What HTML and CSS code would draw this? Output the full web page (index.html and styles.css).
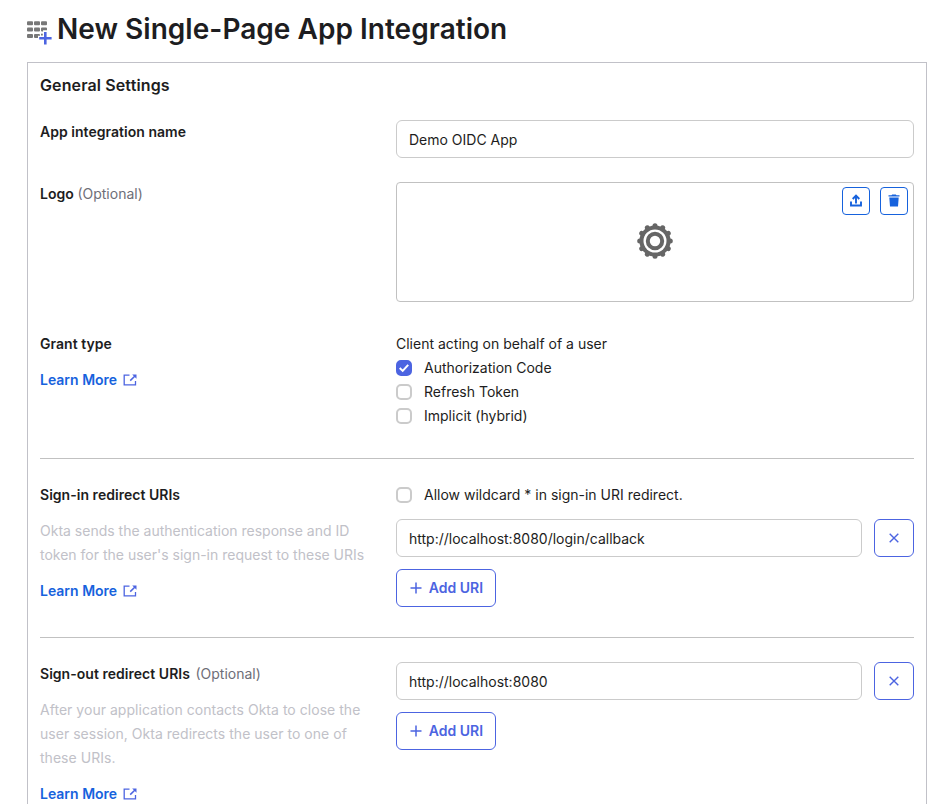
FILE: index.html
```html
<!DOCTYPE html>
<html lang="en">
<head>
<meta charset="utf-8">
<title>New Single-Page App Integration</title>
<link rel="stylesheet" href="styles.css">
</head>
<body>
<svg class="defs" width="0" height="0" aria-hidden="true">
  <symbol id="external" viewBox="0 0 14 12"><path d="M6.5 1.2H1.2v9.6h11.3V7" fill="none" stroke="currentColor" stroke-width="1.3"/><path d="M9.2 .5h4.3v4.3z" fill="currentColor"/><path d="M12 2L7.2 6.6" stroke="currentColor" stroke-width="1.5"/></symbol>
  <symbol id="cross" viewBox="0 0 10 10"><path d="M.7 .7l8.6 8.6M9.3 .7L.7 9.3" fill="none" stroke="currentColor" stroke-width="1.4"/></symbol>
  <symbol id="plus" viewBox="0 0 12 12"><path d="M6 .5v11M.5 6h11" fill="none" stroke="currentColor" stroke-width="1.5"/></symbol>
</svg>
<header class="page-head">
  <svg class="grid-icon" width="25" height="25" viewBox="0 0 25 25">
    <g fill="#777">
      <rect x="0" y="1.2" width="6" height="4" rx="1"/><rect x="7" y="1.2" width="6" height="4" rx="1"/><rect x="14" y="1.2" width="6" height="4" rx="1"/>
      <rect x="0" y="7.6" width="6" height="4" rx="1"/><rect x="7" y="7.6" width="6" height="4" rx="1"/><path d="M15 7.6h4q1 0 1 1v1.6h-4v1.4h-1q-1 0-1-1v-2q0-1 1-1z"/>
      <rect x="0" y="13.9" width="6" height="4" rx="1"/><path d="M8 13.9h4q1 0 1 1v.8h-2v2.2H8q-1 0-1-1v-2q0-1 1-1z"/><rect x="14" y="13.7" width="1.8" height="1.8"/>
    </g>
    <path d="M18.3 12v12.4M12.2 18.3h12.4" stroke="#4c64e1" stroke-width="2.6" fill="none"/>
  </svg>
  <h1>New Single-Page App Integration</h1>
</header>
<main class="panel">
  <h2>General Settings</h2>
  <section class="row name-row">
    <label class="label" for="app-name">App integration name</label>
    <input class="field" id="app-name" type="text" value="Demo OIDC App">
  </section>
  <section class="row logo-row">
    <div class="label">Logo <span class="optional">(Optional)</span></div>
    <div class="logo-box">
      <svg class="gear" width="36" height="36" viewBox="-18 -18 36 36">
        <g stroke="#666" stroke-width="5" stroke-linecap="round">
          <path d="M0-15.3V15.3"/><path d="M0-15.3V15.3" transform="rotate(30)"/><path d="M0-15.3V15.3" transform="rotate(60)"/><path d="M0-15.3V15.3" transform="rotate(90)"/><path d="M0-15.3V15.3" transform="rotate(120)"/><path d="M0-15.3V15.3" transform="rotate(150)"/>
        </g>
        <circle r="15.6" fill="#666"/><circle r="11.5" fill="#fff"/><circle r="7.2" fill="#fff" stroke="#666" stroke-width="4"/>
      </svg>
      <div class="logo-actions">
        <button class="icon-btn" aria-label="Upload logo"><svg width="12" height="13" viewBox="0 0 12 13"><path d="M1 7.5v4h10v-4M6 9.5V1.5M2.7 5L6 1.7L9.3 5" fill="none" stroke="currentColor" stroke-width="1.9"/></svg></button>
        <button class="icon-btn" aria-label="Delete logo"><svg width="12" height="13" viewBox="0 0 12 13"><path d="M.5 1.2h3L4.2.4h3.6l.7.8h3v1.3H.5zM1.3 3.4h9.4L10 12.4H2z" fill="currentColor"/></svg></button>
      </div>
    </div>
  </section>
  <section class="row grant-row">
    <div class="side">
      <div class="label">Grant type</div>
      <a class="more" href="#">Learn More<svg width="14" height="12"><use href="#external"/></svg></a>
    </div>
    <div>
      <div>Client acting on behalf of a user</div>
      <label class="check"><input type="checkbox" checked><span class="box"><svg width="16" height="16" viewBox="0 0 16 16"><path d="M3.7 8.1l3 2.8 5.5-6" fill="none" stroke="#fff" stroke-width="2"/></svg></span>Authorization Code</label>
      <label class="check"><input type="checkbox"><span class="box"></span>Refresh Token</label>
      <label class="check"><input type="checkbox"><span class="box"></span>Implicit (hybrid)</label>
    </div>
  </section>
  <section class="row ruled signin-row">
    <div class="side">
      <div class="label">Sign-in redirect URIs</div>
      <p class="help">Okta sends the authentication response and ID token for the user's sign-in request to these URIs</p>
      <a class="more" href="#">Learn More<svg width="14" height="12"><use href="#external"/></svg></a>
    </div>
    <div class="uris">
      <label class="check"><input type="checkbox"><span class="box"></span>Allow wildcard * in sign-in URI redirect.</label>
      <div class="uri"><input class="field" type="text" aria-label="Sign-in URI" value="http://localhost:8080/login/callback"><button class="remove" aria-label="Remove"><svg width="10" height="10"><use href="#cross"/></svg></button></div>
      <button class="add"><svg width="12" height="12"><use href="#plus"/></svg>Add URI</button>
    </div>
  </section>
  <section class="row ruled">
    <div class="side">
      <div class="label">Sign-out redirect URIs <span class="optional wide">(Optional)</span></div>
      <p class="help signout-help">After your application contacts Okta to close the user session, Okta redirects the user to one of these URIs.</p>
      <a class="more last" href="#">Learn More<svg width="14" height="12"><use href="#external"/></svg></a>
    </div>
    <div class="uris">
      <div class="uri"><input class="field" type="text" aria-label="Sign-out URI" value="http://localhost:8080"><button class="remove" aria-label="Remove"><svg width="10" height="10"><use href="#cross"/></svg></button></div>
      <button class="add"><svg width="12" height="12"><use href="#plus"/></svg>Add URI</button>
    </div>
  </section>
</main>
</body>
</html>
```
FILE: styles.css
```css
* { box-sizing: border-box; }
body {
  margin: 0;
  background: #fff;
  color: #1d1d21;
  font: 400 14px/24px Inter, "Liberation Sans", sans-serif;
}
svg { display: block; flex: none; }
.defs { position: absolute; }
.page-head {
  display: flex;
  height: 62px;
  padding: 12px 0 0 27px;
  gap: 5px;
}
.grid-icon { margin-top: 8px; }
h1 { margin: 0; font-size: 28px; line-height: 34px; font-weight: 600; letter-spacing: .03px; white-space: nowrap; }
.panel {
  width: 900px;
  height: 742px;
  margin-left: 27px;
  padding: 10px 12px 0;
  border: 1px solid #c1c1c8;
  border-bottom: 0;
}
h2 { margin: 0 0 23px; font-size: 16px; line-height: 24px; font-weight: 600; letter-spacing: .12px; }
.row { display: grid; grid-template-columns: 356px 518px; align-items: start; }
.label { font-weight: 600; letter-spacing: .03px; white-space: nowrap; }
.optional { font-weight: 400; letter-spacing: 0; color: #6e6e78; }
.optional.wide { margin-left: 2px; }
.name-row { margin-bottom: 24px; }
.logo-row { margin-bottom: 30px; }
.grant-row { margin-bottom: 30px; }
.signin-row { margin-bottom: 30px; }
.ruled { border-top: 1px solid #c1c1c1; padding-top: 24px; }
.field {
  width: 100%;
  min-width: 0;
  height: 38px;
  padding: 0 12px;
  border: 1px solid #cbcbcb;
  border-radius: 6px;
  background: #fff;
  color: inherit;
  font: inherit;
  outline: 0;
}
.logo-box {
  position: relative;
  display: flex;
  justify-content: center;
  align-items: center;
  height: 120px;
  border: 1px solid #c1c1c1;
  border-radius: 4px;
}
.gear { margin-bottom: 2px; }
.logo-actions { position: absolute; top: 4px; right: 5px; display: flex; gap: 10px; }
button { display: flex; justify-content: center; align-items: center; padding: 0; background: #fff; font: inherit; }
.icon-btn { width: 28px; height: 28px; border: 1px solid #1662dd; border-radius: 4px; color: #1662dd; }
.icon-btn svg { margin-bottom: 1px; }
.side { display: flex; flex-direction: column; gap: 12px; }
.help { width: 332px; margin: 0; color: #c1c1c8; }
.signout-help { letter-spacing: .03px; }
.more { display: flex; align-items: center; gap: 6px; color: #1662dd; font-weight: 600; text-decoration: none; }
.more svg { color: #4c64e1; }
.last { height: 22px; padding-top: 2px; line-height: 20px; }
.check { display: flex; align-items: center; gap: 12px; height: 24px; white-space: nowrap; }
.check input { display: none; }
.box { width: 16px; height: 16px; border: 2px solid #cbcbcb; border-radius: 5px; }
.box svg { margin: -2px; }
.check input:checked + .box { border-color: #4c64e1; background: #4c64e1; }
.uris { display: flex; flex-direction: column; gap: 12px; }
.uri { display: flex; gap: 12px; }
.remove { flex: none; width: 40px; height: 38px; border: 1px solid #4c64e1; border-radius: 6px; color: #4c64e1; }
.add { width: 100px; height: 38px; gap: 7px; padding-left: 1px; border: 1px solid #4c64e1; border-radius: 6px; color: #4c64e1; font-weight: 600; }
```
